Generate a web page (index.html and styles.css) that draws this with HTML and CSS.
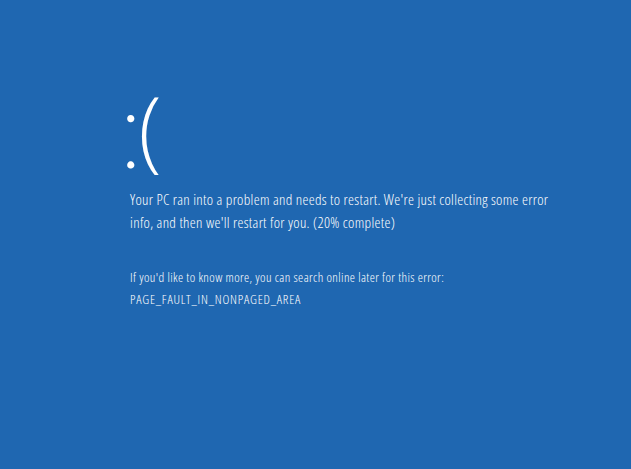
FILE: index.html
```html
<!DOCTYPE html>
<html lang="en">
<head>
<meta charset="utf-8">
<title>Blue screen</title>
<link rel="stylesheet" href="styles.css">
</head>
<body>
<main class="screen">
  <div class="face"><span class="colon">:</span><span class="paren">(</span></div>
  <p class="message">Your PC ran into a problem and needs to restart. We're just collecting some error info, and then we'll restart for you. (20% complete)</p>
  <div class="details">
    <p class="hint">If you'd like to know more, you can search online later for this error:</p>
    <p class="code">PAGE_FAULT_IN_NONPAGED_AREA</p>
  </div>
</main>
</body>
</html>
```
FILE: styles.css
```css
html, body {
  margin: 0;
  height: 100%;
  background: #1f67b1;
}
body {
  color: #ffffff;
  font-family: "Open Sans", "Liberation Sans", sans-serif;
  font-weight: 300;
  font-stretch: 75%;
}
.screen {
  padding: 70px 0 0 130px;
}
.face {
  display: flex;
  align-items: flex-start;
  height: 118px;
  margin-left: -12px;
}
.colon {
  font-family: Lato, "Open Sans", sans-serif;
  font-weight: 200;
  font-stretch: normal;
  font-size: 110px;
  line-height: 1;
  letter-spacing: -6px;
}
.paren {
  font-size: 89px;
  line-height: 1;
  margin-top: 12px;
}
.message {
  margin: 0;
  width: 430px;
  font-size: 15px;
  line-height: 23px;
  letter-spacing: 0.32px;
}
.details {
  margin-top: 32px;
  font-size: 13px;
  line-height: 22px;
  letter-spacing: 0.4px;
}
.details p {
  margin: 0;
}
.details .code {
  letter-spacing: 0.8px;
}
```
